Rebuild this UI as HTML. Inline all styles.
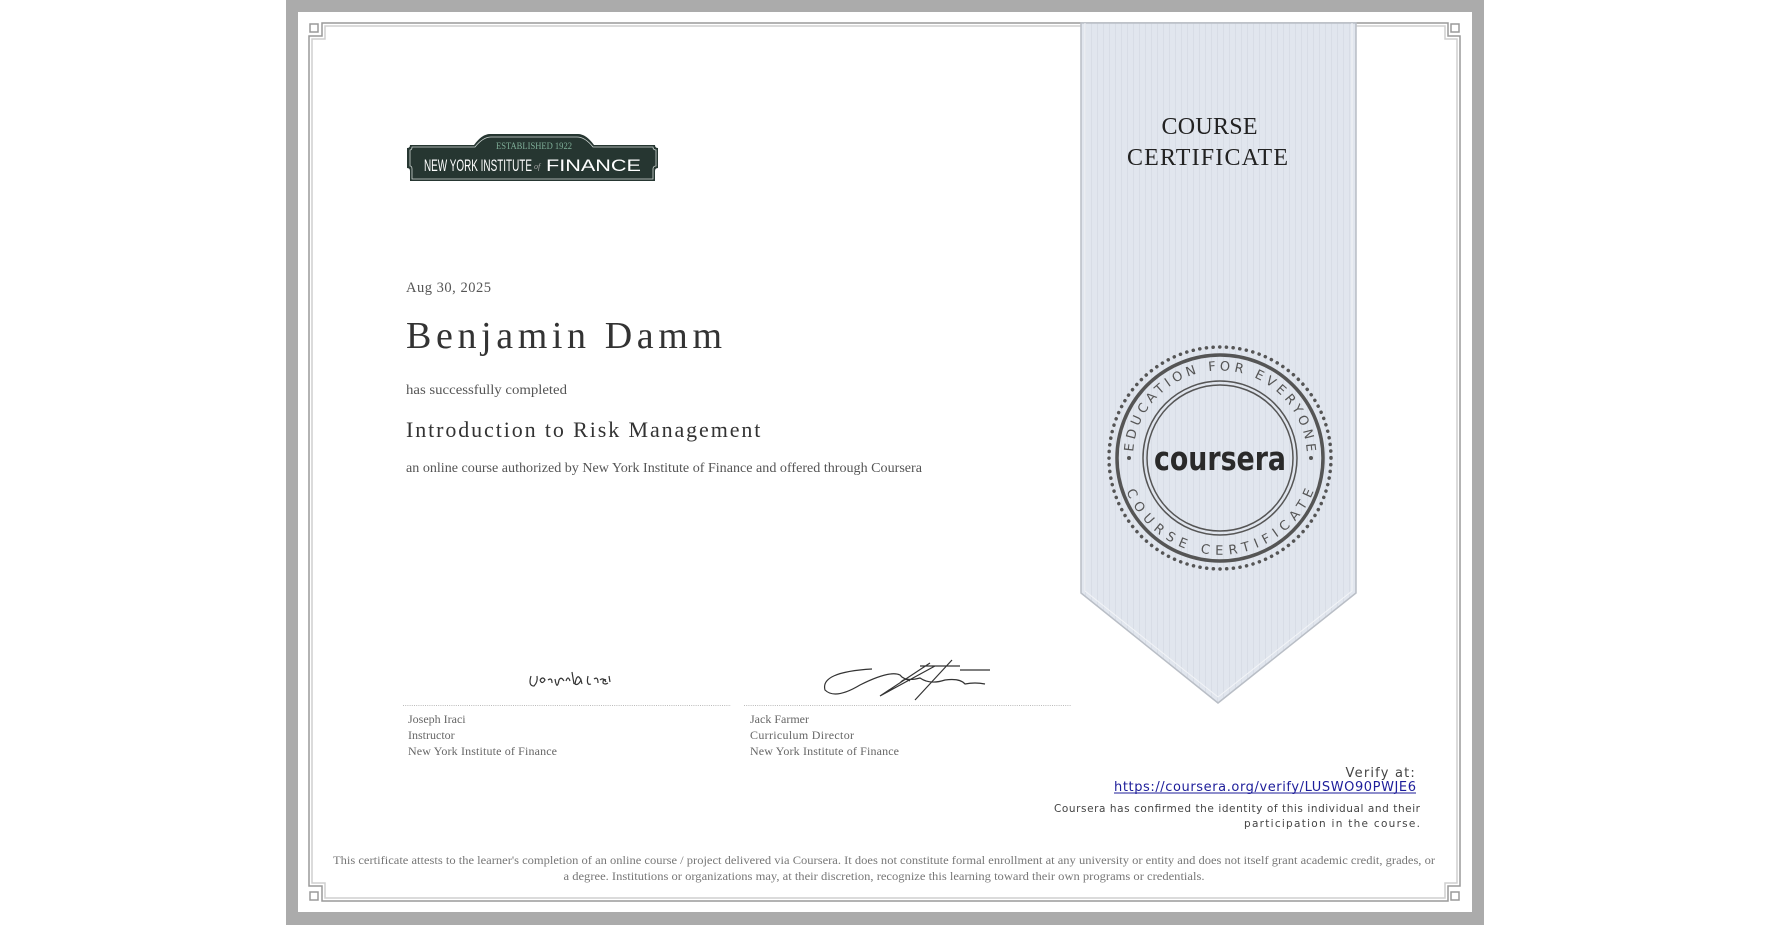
<!DOCTYPE html>
<html><head><meta charset="utf-8"><style>
html,body{margin:0;padding:0;background:#fff;}
svg{display:block}
</style></head><body>
<svg width="1772" height="928" viewBox="0 0 1772 928" xmlns="http://www.w3.org/2000/svg">
<defs>
<pattern id="stripes" width="6" height="10" patternUnits="userSpaceOnUse">
<rect width="6" height="10" fill="#e1e6ee"/><rect x="5" width="1" height="10" fill="#d8dde6"/>
</pattern>
</defs>
<rect x="0" y="0" width="1772" height="928" fill="#fff"/>
<rect x="286" y="0" width="1198" height="925" fill="#ababab"/>
<rect x="298" y="12" width="1174" height="900" fill="#fff"/>
<g fill="none" stroke="#9a9a9a" stroke-width="1.5">
<path d="M322 23 H1448 V36 H1460 V886 H1448 V901 H322 V886 H309 V36 H322 Z"/>
<path d="M325 26 H1445 V39 H1457 V883 H1445 V898 H325 V883 H312 V39 H325 Z" stroke="#cfcfcf"/>
<rect x="310" y="24" width="8" height="8"/>
<rect x="1451" y="24" width="8" height="8"/>
<rect x="310" y="892" width="8" height="8"/>
<rect x="1451" y="892" width="8" height="8"/>
</g>
<path d="M1081 23 H1356 V593 L1218 703 L1081 593 Z" fill="url(#stripes)" stroke="#b9bec6" stroke-width="1.5"/>
<path d="M1085 23 V591 L1218 697 L1352 591 V23" fill="none" stroke="#f2f4f7" stroke-width="1"/>
<text x="1211" y="134" text-anchor="middle" font-family="Liberation Serif, serif" font-size="24" fill="#222" textLength="99" letter-spacing="3">COURSE</text>
<text x="1209" y="165" text-anchor="middle" font-family="Liberation Serif, serif" font-size="24" fill="#222" textLength="164" letter-spacing="3">CERTIFICATE</text>
<g transform="translate(1220,458)">
<circle r="111" fill="none" stroke="#555" stroke-width="3.5" stroke-dasharray="0.1 6.6" stroke-linecap="round"/>
<circle r="103" fill="none" stroke="#555" stroke-width="3.5"/>
<circle r="77" fill="none" stroke="#555" stroke-width="1.5"/>
<circle r="73" fill="none" stroke="#555" stroke-width="1.5"/>
<path id="top" d="M-85 18 A87 87 0 1 1 85 18" fill="none"/>
<path id="bot" d="M-92 -4 A92 92 0 0 0 92 -4" fill="none"/>
<text font-family="DejaVu Sans, sans-serif" font-size="13" fill="#555"><textPath href="#top" startOffset="50%" text-anchor="middle" textLength="262" lengthAdjust="spacing">EDUCATION FOR EVERYONE</textPath></text>
<text font-family="DejaVu Sans, sans-serif" font-size="13" fill="#555"><textPath href="#bot" startOffset="50%" text-anchor="middle" textLength="220" lengthAdjust="spacing" dominant-baseline="hanging">COURSE CERTIFICATE</textPath></text>
<circle cx="-91" cy="0" r="2" fill="#555"/><circle cx="91" cy="0" r="2" fill="#555"/>
<text x="0" y="12" text-anchor="middle" font-family="DejaVu Sans, sans-serif" font-weight="bold" font-size="33" fill="#2a2a2a" textLength="132" lengthAdjust="spacingAndGlyphs">coursera</text>
</g>
<g>
<path d="M407 148 Q410 148 410 145 H474 Q482 134 490 134 H578 Q586 134 594 145 H655 Q655 148 658 148 V168 Q655 168 655 171 V181 H410 V171 Q410 168 407 168 Z" fill="#263631"/>
<path d="M410 150 Q412 150 412 147 H475 Q483 137 491 137 H577 Q585 137 593 147 H653 Q653 150 656 150 V166 Q653 166 653 169 V179 H412 V169 Q412 166 410 166 Z" fill="none" stroke="#cfd6d3" stroke-width="0.8"/>
<text x="534" y="149" text-anchor="middle" font-family="Liberation Serif, serif" font-size="9" fill="#7fae98" textLength="76" lengthAdjust="spacingAndGlyphs">ESTABLISHED 1922</text>
<text x="424" y="171" font-family="Liberation Sans, sans-serif" font-size="17" fill="#fff" textLength="108" lengthAdjust="spacingAndGlyphs">NEW YORK INSTITUTE</text>
<text x="534" y="169" font-family="Liberation Serif, serif" font-style="italic" font-size="8" fill="#aaa">of</text>
<text x="546" y="171" font-family="Liberation Sans, sans-serif" font-size="17" fill="#fff" textLength="95" lengthAdjust="spacingAndGlyphs">FINANCE</text>
</g>
<g font-family="Liberation Serif, serif">
<text x="406" y="292" font-size="14.5" fill="#555" textLength="86" letter-spacing="1">Aug 30, 2025</text>
<text x="406" y="348" font-size="38" fill="#333" textLength="318" letter-spacing="2">Benjamin Damm</text>
<text x="406" y="394" font-size="14" fill="#555" textLength="161" lengthAdjust="spacingAndGlyphs">has successfully completed</text>
<text x="406" y="437" font-size="22" fill="#333" textLength="355" letter-spacing="0.6">Introduction to Risk Management</text>
<text x="406" y="472" font-size="14" fill="#555" textLength="516" lengthAdjust="spacingAndGlyphs">an online course authorized by New York Institute of Finance and offered through Coursera</text>
</g>
<g fill="none" stroke="#333" stroke-width="1.2">
<path d="M531 676 q-3 10 3 10 q4-4 3-10 M540 680 q3-4 5 0 q-3 5 -5 0 M548 680 q4-3 4 3 M555 679 q2 12 4 1 q2-4 5 1 M566 681 q2-6 4 0 M572 672 l2 12 M581 680 q-4-8 -6 4 q3 2 6-4 l1 4 M588 676 q-2 10 3 8 M594 679 q4-3 4 4 M600 680 q3-3 6 2 M606 680 q-3-2-3 3 q2 2 5 0 M609 676 l1 6"/>
<path d="M930 663 L880 696 L935 666 M952 660 L915 700 M872 669 Q820 672 825 690 Q835 700 860 685 Q890 670 900 675 Q905 682 920 678 Q930 685 945 680 Q960 678 965 684 Q975 682 985 684 M900 683 q5-6 10-2 M960 670 H990 M920 666 H960"/>
</g>
<g stroke="#bbb" stroke-width="1" stroke-dasharray="1 1.2">
<line x1="403" y1="705.5" x2="731" y2="705.5"/>
<line x1="744" y1="705.5" x2="1071" y2="705.5"/>
</g>
<g font-family="Liberation Serif, serif" font-size="12" fill="#666">
<text x="408" y="723">Joseph Iraci</text>
<text x="408" y="739">Instructor</text>
<text x="408" y="755" textLength="149">New York Institute of Finance</text>
<text x="750" y="723">Jack Farmer</text>
<text x="750" y="739" textLength="104">Curriculum Director</text>
<text x="750" y="755" textLength="149">New York Institute of Finance</text>
</g>
<g font-family="DejaVu Sans, sans-serif" fill="#444" text-anchor="end">
<text x="1416" y="777" font-size="13" letter-spacing="1.2">Verify at:</text>
<text x="1416" y="791" font-size="13" fill="#1d1d9a" textLength="302">https://coursera.org/verify/LUSWO90PWJE6</text>
<line x1="1114" y1="793" x2="1416" y2="793" stroke="#1d1d9a" stroke-width="1"/>
<text x="1420" y="812" font-size="10.5" textLength="366">Coursera has confirmed the identity of this individual and their</text>
<text x="1420" y="827" font-size="10.5" textLength="176">participation in the course.</text>
</g>
<g font-family="Liberation Serif, serif" font-size="12" fill="#777" text-anchor="middle">
<text x="884" y="864" textLength="1102" lengthAdjust="spacingAndGlyphs">This certificate attests to the learner's completion of an online course / project delivered via Coursera. It does not constitute formal enrollment at any university or entity and does not itself grant academic credit, grades, or</text>
<text x="884" y="880" textLength="641" lengthAdjust="spacingAndGlyphs">a degree. Institutions or organizations may, at their discretion, recognize this learning toward their own programs or credentials.</text>
</g>
</svg>
</body></html>
